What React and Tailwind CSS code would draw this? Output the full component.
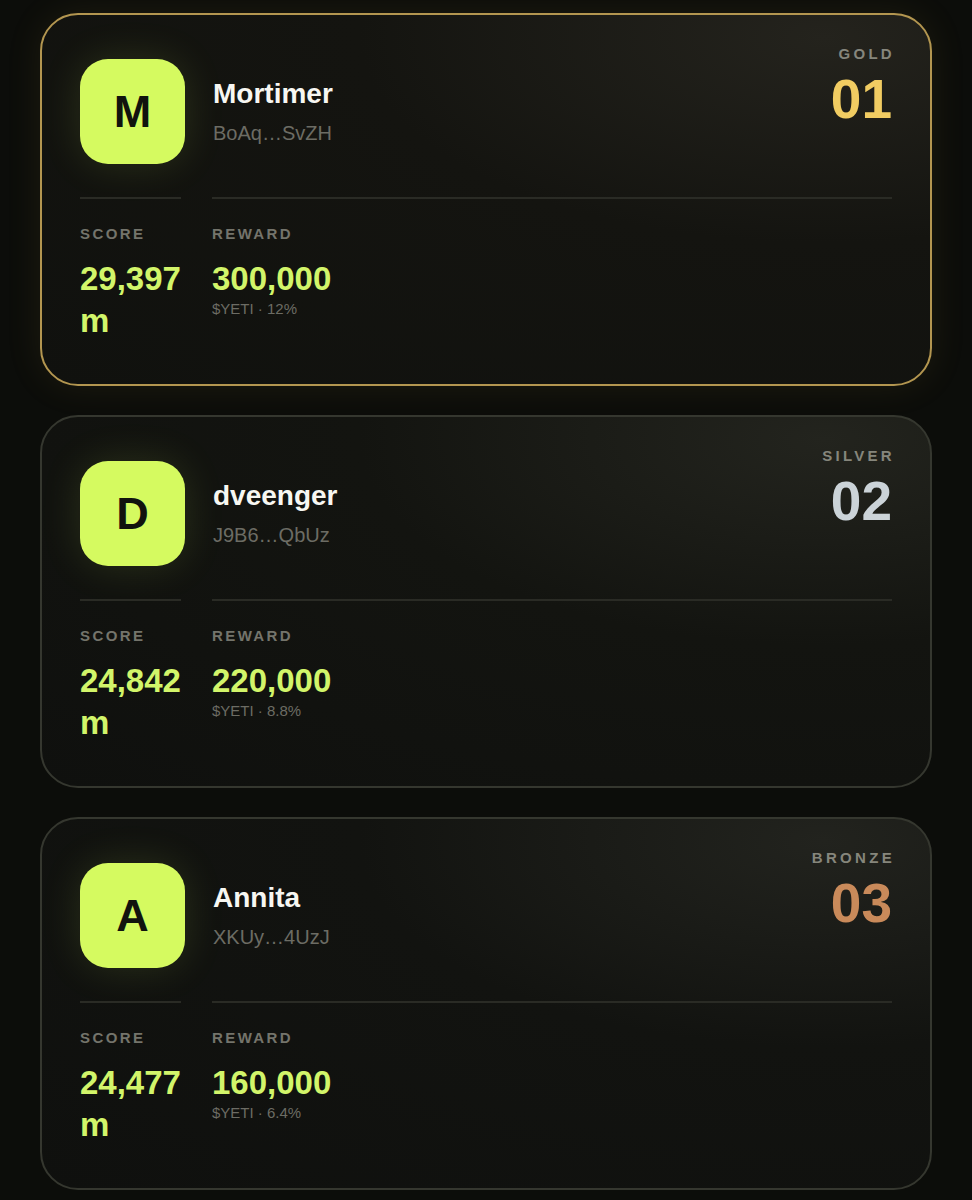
import React from "react";

const players = [
  {
    initial: "M",
    name: "Mortimer",
    addr: "BoAq…SvZH",
    tier: "GOLD",
    rank: "01",
    score: "29,397",
    reward: "300,000",
    pct: "12%",
    border: "border-[#b39650]",
    rankColor: "text-[#f1cc62]",
    bg: "bg-[radial-gradient(ellipse_at_88%_6%,#24231d_0%,#141410_42%,#10110e_100%)]",
    glow: "shadow-[0_0_36px_rgba(190,160,70,0.10)]",
  },
  {
    initial: "D",
    name: "dveenger",
    addr: "J9B6…QbUz",
    tier: "SILVER",
    rank: "02",
    score: "24,842",
    reward: "220,000",
    pct: "8.8%",
    border: "border-[#35372f]",
    rankColor: "text-[#cbd3d8]",
    bg: "bg-[radial-gradient(ellipse_at_88%_6%,#23241e_0%,#131410_42%,#0f100e_100%)]",
    glow: "",
  },
  {
    initial: "A",
    name: "Annita",
    addr: "XKUy…4UzJ",
    tier: "BRONZE",
    rank: "03",
    score: "24,477",
    reward: "160,000",
    pct: "6.4%",
    border: "border-[#35372f]",
    rankColor: "text-[#c98a5a]",
    bg: "bg-[radial-gradient(ellipse_at_88%_6%,#22231e_0%,#121310_42%,#0f100e_100%)]",
    glow: "",
  },
];

function Card({ p }) {
  return (
    <div
      className={`rounded-[38px] border-2 ${p.border} ${p.bg} ${p.glow} px-[38px] pt-[29px] pb-[42px]`}
    >
      <div className="flex items-start justify-between">
        <div className="mt-[15px] flex items-center gap-[28px]">
          <div className="flex h-[105px] w-[105px] items-center justify-center rounded-[28px] bg-[#d5fa60] shadow-[0_0_40px_rgba(212,250,94,0.13)]">
            <span className="text-[45px] font-bold leading-none text-[#11130e]">
              {p.initial}
            </span>
          </div>
          <div className="flex flex-col">
            <span className="text-[28px] font-bold leading-[1.2] text-[#f7f7f2]">
              {p.name}
            </span>
            <span className="mt-[9px] text-[20px] leading-[26px] text-[#6c6c64]">
              {p.addr}
            </span>
          </div>
        </div>
        <div className="flex flex-col items-end">
          <span className="-mr-[3px] text-[15px] font-bold leading-[20px] tracking-[0.22em] text-[#86867c]">
            {p.tier}
          </span>
          <span
            className={`mt-[8px] text-[55px] font-bold leading-none ${p.rankColor}`}
          >
            {p.rank}
          </span>
        </div>
      </div>

      <div className="mt-[33px] grid grid-cols-[101px_1fr] gap-x-[31px]">
        <div className="h-[2px] bg-[#2a2b25]" />
        <div className="h-[2px] bg-[#2a2b25]" />
      </div>

      <div className="mt-[25px] grid grid-cols-[101px_1fr] gap-x-[31px]">
        <div className="flex flex-col">
          <span className="text-[15px] font-bold leading-[20px] tracking-[0.16em] text-[#74746b]">
            SCORE
          </span>
          <span className="mt-[14px] text-[33px] font-bold leading-[42px] text-[#d2f56a]">
            {p.score} m
          </span>
        </div>
        <div className="flex flex-col">
          <span className="text-[15px] font-bold leading-[20px] tracking-[0.16em] text-[#74746b]">
            REWARD
          </span>
          <span className="mt-[14px] text-[33px] font-bold leading-[42px] text-[#d2f56a]">
            {p.reward}
          </span>
          <span className="text-[15px] leading-[18px] text-[#6c6c64]">
            $YETI · {p.pct}
          </span>
        </div>
      </div>
    </div>
  );
}

export default function App() {
  return (
    <div
      className="min-h-[1200px] w-full bg-[#0c0d0a] px-[40px] pt-[13px] pb-[10px]"
      style={{ fontFamily: '"Liberation Sans", Arial, sans-serif' }}
    >
      <div className="flex flex-col gap-[29px]">
        {players.map((p) => (
          <Card key={p.rank} p={p} />
        ))}
      </div>
    </div>
  );
}
